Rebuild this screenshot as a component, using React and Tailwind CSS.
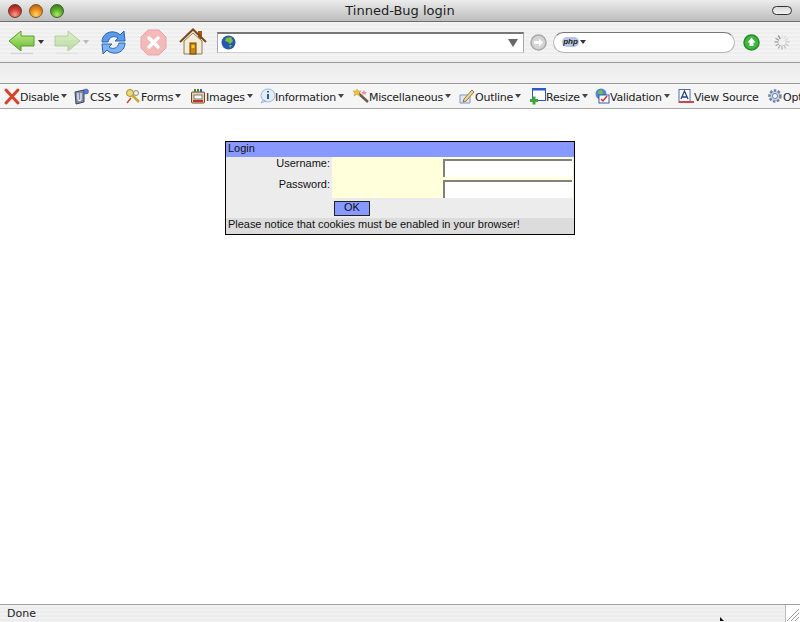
import React from 'react';

function Lights() {
  return (
    <div className="flex items-center gap-[7px] pl-[8px]">
      <span className="w-[14px] h-[14px] rounded-full border border-[#6a3a38] bg-[radial-gradient(circle_at_50%_80%,#f8a090,#d23a30_50%,#7a1c1c)]" />
      <span className="w-[14px] h-[14px] rounded-full border border-[#7a5a28] bg-[radial-gradient(circle_at_50%_80%,#fcd860,#ea8a1c_50%,#96540f)]" />
      <span className="w-[14px] h-[14px] rounded-full border border-[#3f6030] bg-[radial-gradient(circle_at_50%_80%,#b0e860,#58a82c_50%,#2a6a18)]" />
    </div>
  );
}

function BackArrow({ faded }) {
  return (
    <svg width="28" height="25" viewBox="0 0 28 25" className={faded ? 'opacity-40' : ''}>
      <defs>
        <linearGradient id={faded ? 'ag2' : 'ag1'} x1="0" y1="0" x2="0" y2="1">
          <stop offset="0" stopColor="#c8f090" />
          <stop offset="1" stopColor="#62b62e" />
        </linearGradient>
      </defs>
      <path d="M3 23.500 H25" stroke="#d4d4d4" strokeWidth="1.500" />
      <path
        d={faded ? 'M27 11 L15 1 V6 H2 V16 H15 V21 Z' : 'M1 11 L13 1 V6 H26 V16 H13 V21 Z'}
        fill={`url(#${faded ? 'ag2' : 'ag1'})`}
        stroke="#559e2a"
      />
    </svg>
  );
}

function Caret({ className = '' }) {
  return <span className={`w-0 h-0 border-x-[3px] border-x-transparent border-t-[4px] ${className}`} />;
}

function Reload() {
  return (
    <svg width="27" height="27" viewBox="0 0 27 27">
      <path d="M2 13 C2 6 8 2 14 3 C17 3.500 19 4.500 20 6 L24 2 L25 12 L15 12 L18 9 C14 6 9 8 8 13 Z" fill="#5b9be8" stroke="#2a62b8" />
      <path d="M25 14 C25 21 19 25 13 24 C10 23.500 8 22.500 7 21 L3 25 L2 15 L12 15 L9 18 C13 21 18 19 19 14 Z" fill="#7db4f0" stroke="#2a62b8" />
    </svg>
  );
}

function Stop() {
  return (
    <svg width="27" height="27" viewBox="0 0 27 27">
      <path d="M8 1 H19 L26 8 V19 L19 26 H8 L1 19 V8 Z" fill="#f4b9b9" stroke="#e6a5a5" />
      <path d="M9 9 L18 18 M18 9 L9 18" stroke="#fff" strokeWidth="3.500" strokeLinecap="round" />
    </svg>
  );
}

function Home() {
  return (
    <svg width="28" height="28" viewBox="0 0 28 28">
      <rect x="19" y="3" width="4" height="8" fill="#a8551c" />
      <path d="M5 13 L14 5 L23 13 V26 H5 Z" fill="#f4ecd4" stroke="#8a7a5a" />
      <path d="M1 14 L14 1.500 L27 14" fill="none" stroke="#7c4a14" strokeWidth="2" />
      <rect x="11" y="15" width="6" height="11" fill="#c8860f" stroke="#6c4208" />
      <rect x="12.500" y="17" width="3" height="3" fill="#f4c830" />
    </svg>
  );
}

function Globe() {
  return (
    <svg width="15" height="15" viewBox="0 0 15 15">
      <circle cx="7.500" cy="7.500" r="7" fill="#2757b0" />
      <path d="M5 3 L10 2 L12 6 L9 9 L7 7 L4 6 Z M8 10 L11 10 L9 13 Z" fill="#7cc03c" />
    </svg>
  );
}

function CircleButton({ fill, stroke, glyph }) {
  return (
    <svg width="17" height="17" viewBox="0 0 17 17">
      <circle cx="8.500" cy="8.500" r="7.500" fill={fill} stroke={stroke} strokeWidth="1.500" />
      <path d={glyph} fill="#fff" />
    </svg>
  );
}

function Spinner() {
  const spokes = [0, 30, 60, 90, 120, 150, 180, 210, 240, 270, 300, 330];
  return (
    <svg width="18" height="18" viewBox="0 0 18 18">
      {spokes.map((a, i) => (
        <line
          key={a}
          x1="9"
          y1="1.500"
          x2="9"
          y2="5.500"
          stroke="#7a7a7a"
          strokeWidth="1.300"
          strokeOpacity={0.1 + (i / 12) * 0.8}
          transform={`rotate(${a} 9 9)`}
        />
      ))}
    </svg>
  );
}

const toolIcons = {
  disable: (
    <path d="M2 2 L14 15 M14 2 L2 15" stroke="#d8402c" strokeWidth="3" strokeLinecap="round" />
  ),
  css: (
    <g>
      <path d="M1 4 L10 2 V14 L2 16 Z" fill="#7f8ba6" stroke="#3c445c" />
      <path d="M4 5 V11 C4 13 7 13 7 11 V5" fill="none" stroke="#f0f0f0" strokeWidth="1.300" />
      <circle cx="12" cy="3.500" r="2.500" fill="#5a78d8" stroke="#33478f" strokeWidth="0.500" />
    </g>
  ),
  forms: (
    <g>
      <circle cx="5" cy="5" r="3.500" fill="#f0d878" stroke="#a88a28" />
      <path d="M7 7 L14 14" stroke="#c8a838" strokeWidth="2.500" />
      <circle cx="11" cy="5" r="2.500" fill="#f4f0e0" stroke="#8a8a8a" />
      <path d="M2 15 L6 10" stroke="#c84a30" strokeWidth="1.500" />
    </g>
  ),
  images: (
    <g>
      <rect x="1.500" y="4" width="13" height="11" rx="1" fill="#e8d0b0" stroke="#6a4a2a" />
      <rect x="4" y="7" width="8" height="4" fill="#fff" stroke="#7a7a7a" />
      <path d="M3 13 H13" stroke="#c8302c" strokeWidth="2" />
      <path d="M5 4 V1 M8 4 V1" stroke="#4a8a3a" strokeWidth="2" />
      <path d="M11 4 V1" stroke="#3a5ac8" strokeWidth="2" />
    </g>
  ),
  information: (
    <g>
      <ellipse cx="9" cy="7.500" rx="7" ry="6.500" fill="#e4ecf8" stroke="#9ab8e0" />
      <path d="M9 3 V4.500 M9 6 V11" stroke="#2a5aa8" strokeWidth="2" />
      <path d="M4 12 L2 15 L7 13 Z" fill="#e4ecf8" stroke="#9ab8e0" />
    </g>
  ),
  misc: (
    <g>
      <path d="M4 4 L15 14" stroke="#6a5a48" strokeWidth="2.500" />
      <path d="M4 1 L5 3 L8 3 L6 5 L7 8 L4 6 L1 8 L2 5 L0 3 L3 3 Z" fill="#f4c43c" stroke="#c88a1c" strokeWidth="0.500" />
      <path d="M11 2 L12 4 L14 4 L12.500 5.500 L13 7 L11 6 L9 7 L9.500 5.500 L8 4 L10 4 Z" fill="#f48ca0" />
    </g>
  ),
  outline: (
    <g>
      <path d="M1 7 H11 V15 H1 Z" fill="#e0e8f4" stroke="#7d98c4" />
      <path d="M5 11 L13 2 L15 4 L7 13 L4 14 Z" fill="#f4d68a" stroke="#8a7a4a" />
    </g>
  ),
  resize: (
    <g>
      <rect x="2.500" y="0.500" width="13" height="12" fill="#fff" stroke="#2a5ac8" />
      <path d="M3 1.500 H15" stroke="#2a5ac8" strokeWidth="2" />
      <path d="M0 12.500 H8 M4 8.500 V16.500" stroke="#3ca83c" strokeWidth="3" />
    </g>
  ),
  validation: (
    <g>
      <circle cx="7" cy="6" r="5.500" fill="#4a8ad8" />
      <path d="M4 3 L8 2 L9 6 L5 7 Z" fill="#7cc03c" />
      <rect x="5" y="7" width="10" height="8" fill="#fff" stroke="#3a5aa8" />
      <path d="M7 11 L9 13 L13 8" fill="none" stroke="#c8302c" strokeWidth="1.500" />
    </g>
  ),
  source: (
    <g>
      <rect x="1" y="1.500" width="11" height="13" fill="#fff" stroke="#4a6ab8" />
      <path d="M3 11 L6.500 3 L10 11 M4 9 H9" fill="none" stroke="#26408a" strokeWidth="1.300" />
      <path d="M1 14 H16" stroke="#c84a4a" strokeWidth="2" />
    </g>
  ),
  options: (
    <g>
      <circle cx="8" cy="8" r="5.500" fill="#c4d0e4" stroke="#6c82a8" strokeWidth="2.500" strokeDasharray="2.500 1.500" />
      <circle cx="8" cy="8" r="2.500" fill="#fff" stroke="#6c82a8" />
    </g>
  ),
};

function ToolItem({ icon, label, width, caret = true }) {
  return (
    <div className={`flex items-center shrink-0 ${width}`}>
      <svg width="16" height="17" viewBox="0 0 16 17" className="shrink-0 overflow-visible">
        {toolIcons[icon]}
      </svg>
      <span className="pt-[2px] text-[11px] leading-none tracking-[-0.25px] text-[#222] whitespace-nowrap">{label}</span>
      {caret && <Caret className="ml-[2px] border-t-[#444]" />}
    </div>
  );
}

function Field() {
  return (
    <div className="ml-auto mr-[1px] w-[129px] h-[18px] bg-white border-t-2 border-l-2 border-[#808080]" />
  );
}

export default function App() {
  return (
    <div className="w-[800px] h-[622px] overflow-hidden flex flex-col bg-white font-['DejaVu_Sans',sans-serif] relative">
      <div className="h-[22px] shrink-0 flex items-center border-b border-[#6f6f6f] bg-gradient-to-b from-[#ececec] to-[#bdbdbd]">
        <Lights />
        <div className="flex-1 text-center -ml-[36px] text-[13px] text-[#222]">Tinned-Bug login</div>
        <div className="w-[20px] h-[9px] mr-[8px] rounded-full border border-[#333] bg-gradient-to-b from-[#d8d8d8] to-[#f4f4f4]" />
      </div>

      <div className="h-[41px] shrink-0 flex items-center pl-[8px] border-b border-[#9a9a9a] bg-[repeating-linear-gradient(180deg,#f3f3f3_0px,#f3f3f3_2px,#eeeeee_2px,#eeeeee_4px)]">
        <BackArrow />
        <Caret className="ml-[2px] border-t-[#333]" />
        <div className="ml-[9px]"><BackArrow faded /></div>
        <Caret className="ml-[2px] border-t-[#bbb]" />
        <div className="ml-[11px]"><Reload /></div>
        <div className="ml-[13px]"><Stop /></div>
        <div className="ml-[12px]"><Home /></div>
        <div className="ml-[10px] w-[307px] h-[21px] flex items-center pl-[3px] pr-[5px] bg-white border border-[#a8a8a8] border-t-[#777] border-t-2 border-b-[#d0d0d0]">
          <Globe />
          <span className="ml-auto w-0 h-0 border-x-[5px] border-x-transparent border-t-[8px] border-t-[#666]" />
        </div>
        <div className="ml-[6px]">
          <CircleButton fill="#d4d4d4" stroke="#a8a8a8" glyph="M4 7 H9 V4.500 L13 8.500 L9 12.500 V10 H4 Z" />
        </div>
        <div className="ml-[6px] w-[182px] h-[21px] flex items-center pl-[8px] bg-white rounded-full border border-[#b4b4b4] border-t-[#777]">
          <span className="h-[10px] w-[17px] rounded-full bg-[#b8c4e4] text-[8px] leading-[10px] italic font-bold text-center text-[#222] font-['Liberation_Sans',sans-serif]">php</span>
          <Caret className="ml-[1px] border-t-[#333]" />
        </div>
        <div className="ml-[8px]">
          <CircleButton fill="#3cb83c" stroke="#2c8a2c" glyph="M8.500 3.500 L12.500 8.500 H10.500 V12 H6.500 V8.500 H4.500 Z" />
        </div>
        <div className="ml-[13px]"><Spinner /></div>
      </div>

      <div className="h-[21px] shrink-0 border-b border-[#9a9a9a] bg-gradient-to-b from-[#ececec] to-[#f3f3f3]" />

      <div className="h-[25px] shrink-0 flex items-center pl-[4px] border-b border-[#a8a8a8] bg-[#f5f5f5] overflow-hidden">
        <ToolItem icon="disable" label="Disable" width="w-[70px]" />
        <ToolItem icon="css" label="CSS" width="w-[51px]" />
        <ToolItem icon="forms" label="Forms" width="w-[65px]" />
        <ToolItem icon="images" label="Images" width="w-[69px]" />
        <ToolItem icon="information" label="Information" width="w-[94px]" />
        <ToolItem icon="misc" label="Miscellaneous" width="w-[106px]" />
        <ToolItem icon="outline" label="Outline" width="w-[71px]" />
        <ToolItem icon="resize" label="Resize" width="w-[64px]" />
        <ToolItem icon="validation" label="Validation" width="w-[84px]" />
        <ToolItem icon="source" label="View Source" width="w-[89px]" caret={false} />
        <ToolItem icon="options" label="Options" width="w-[60px]" caret={false} />
      </div>

      <main className="flex-1 pt-[32px] font-['Liberation_Sans',sans-serif] text-[11px] leading-[12px] text-[#111]">
        <div className="mx-auto w-[350px] h-[94px] border border-black bg-[#ececec] flex flex-col">
          <div className="h-[15px] pl-[2px] bg-[#8799ff]">Login</div>
          <div className="flex">
            <div className="w-[106px] text-right pr-[2px]">
              <div className="h-[21px]">Username:</div>
              <div className="h-[20px]">Password:</div>
            </div>
            <div className="w-[241px] h-[41px] bg-[#ffffdc] pt-[2px] flex flex-col gap-[3px]">
              <Field />
              <Field />
            </div>
          </div>
          <div className="h-[20px] pl-[108px] pt-[3px]">
            <div className="w-[36px] h-[15px] bg-[#8799ff] border border-[#222] text-center leading-[11px]">OK</div>
          </div>
          <div className="h-[16px] pl-[2px] bg-[#dcdcdc] tracking-[-0.03px]">Please notice that cookies must be enabled in your browser!</div>
        </div>
      </main>

      <div className="h-[18px] shrink-0 flex items-center border-t border-[#a0a0a0] bg-[repeating-linear-gradient(180deg,#f1f1f1_0px,#f1f1f1_2px,#ececec_2px,#ececec_4px)]">
        <span className="pl-[7px] pt-[2px] text-[11px] text-[#222]">Done</span>
        <div className="ml-auto w-[15px] h-full border-l border-[#bbb] bg-white flex items-end justify-end">
          <svg width="14" height="14" viewBox="0 0 14 14">
            <path d="M1 13 L13 1 M5 13 L13 5 M9 13 L13 9" stroke="#9a9a9a" />
          </svg>
        </div>
      </div>

      <svg width="6" height="5" viewBox="0 0 6 5" className="absolute left-[720px] top-[617px]">
        <path d="M0 0 L4 4 H0 Z" fill="#111" />
      </svg>
    </div>
  );
}
